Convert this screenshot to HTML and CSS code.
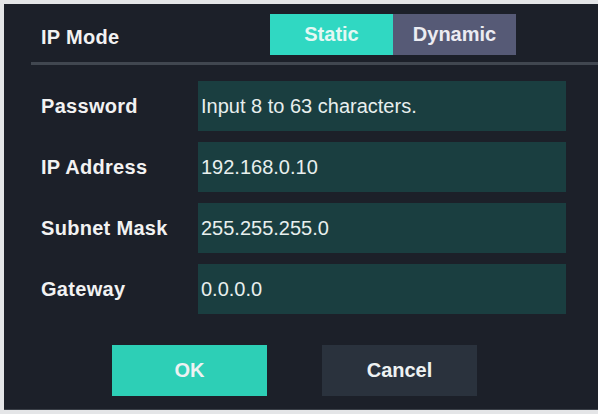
FILE: index.html
```html
<!DOCTYPE html>
<html lang="en">
<head>
    <meta charset="UTF-8">
    <title>Network Settings</title>
    <link rel="stylesheet" href="styles.css">
</head>
<body>
    <div class="panel">
        <!-- IP mode switch -->
        <div class="header">
            <div class="label">IP Mode</div>
            <div class="toggle">
                <button class="toggle-btn active">Static</button>
                <button class="toggle-btn">Dynamic</button>
            </div>
        </div>
        <div class="divider"></div>

        <!-- Fields -->
        <div class="fields">
            <div class="row">
                <div class="label">Password</div>
                <div class="field">Input 8 to 63 characters.</div>
            </div>
            <div class="row">
                <div class="label">IP Address</div>
                <div class="field">192.168.0.10</div>
            </div>
            <div class="row">
                <div class="label">Subnet Mask</div>
                <div class="field">255.255.255.0</div>
            </div>
            <div class="row">
                <div class="label">Gateway</div>
                <div class="field">0.0.0.0</div>
            </div>
        </div>

        <!-- Actions -->
        <div class="actions">
            <button class="btn btn-ok">OK</button>
            <button class="btn btn-cancel">Cancel</button>
        </div>
    </div>
</body>
</html>
```

FILE: styles.css
```css
* {
    margin: 0;
    padding: 0;
    box-sizing: border-box;
}

body {
    font-family: "Liberation Sans", Arial, sans-serif;
    background: #e4e5e7;
    width: 598px;
    height: 414px;
    overflow: hidden;
}

.panel {
    margin: 4px 0 0 4px;
    height: 406px;
    background: #1c2029;
    border-bottom: 1px solid #3a3f47;
}

.label {
    color: #f2f2f2;
    font-size: 20px;
    font-weight: bold;
    letter-spacing: 0.3px;
}

/* Header */
.header {
    display: flex;
    align-items: center;
    height: 51px;
    padding: 10px 0 0 37px;
}

.header .label {
    width: 229px;
    padding-top: 6px;
}

.toggle {
    display: flex;
    height: 41px;
}

.toggle-btn {
    width: 123px;
    border: none;
    font-family: inherit;
    font-size: 20px;
    font-weight: bold;
    color: #ececf2;
    background: #565a76;
}

.toggle-btn.active {
    background: #30d8c2;
    color: #e4f8f4;
}

.divider {
    margin: 7px 0 0 27px;
    height: 3px;
    background: #414750;
}

/* Fields */
.fields {
    display: flex;
    flex-direction: column;
    gap: 11px;
    padding: 16px 0 0 37px;
}

.row {
    display: grid;
    grid-template-columns: 157px 368px;
    align-items: center;
    height: 50px;
}

.field {
    height: 50px;
    display: flex;
    align-items: center;
    padding-left: 3px;
    background: #1a3e40;
    color: #e8efee;
    font-size: 20px;
}

/* Buttons */
.actions {
    display: flex;
    gap: 55px;
    padding: 31px 0 0 108px;
}

.btn {
    width: 155px;
    height: 51px;
    border: none;
    font-family: inherit;
    font-size: 20px;
    font-weight: bold;
    color: #eef2f3;
}

.btn-ok {
    background: #2dcfb6;
}

.btn-cancel {
    background: #2a323d;
}
```
